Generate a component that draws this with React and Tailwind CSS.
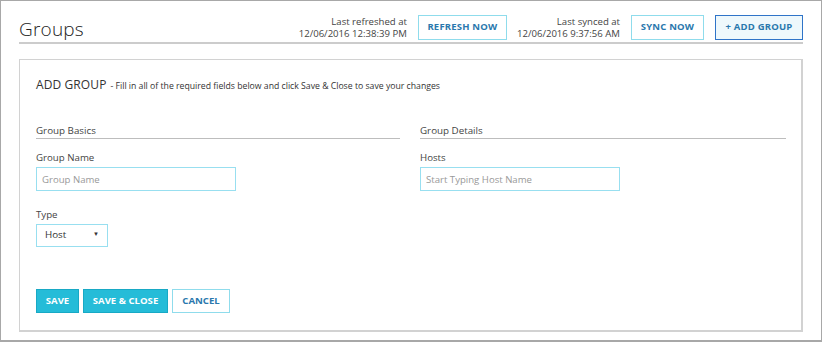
import React from 'react';

const font = { fontFamily: '"Open Sans", "Liberation Sans", sans-serif' };

const HeaderButton = ({ children, className = '' }) => (
    <button
        className={`h-[25px] border text-[9.5px] font-bold tracking-[0.2px] text-[#2a78ad] ${className}`}
    >
        {children}
    </button>
);

const Stamp = ({ label, value }) => (
    <div className="text-right text-[9.6px] leading-[12px] text-[#444]">
        <div>{label}</div>
        <div>{value}</div>
    </div>
);

const App = () => {
    return (
        <div
            className="w-[822px] h-[342px] bg-white border border-[#a8a8a8] border-b-2 px-[18px] pt-[14px]"
            style={font}
        >
            {/* Header */}
            <div className="flex items-end border-b-2 border-[#cccccc] pb-[2px]">
                <h1 className="flex-1 text-[19px] font-light leading-none pb-[1px] text-[#222] tracking-[0.2px]">Groups</h1>
                <Stamp label="Last refreshed at" value="12/06/2016 12:38:39 PM" />
                <HeaderButton className="ml-[11px] w-[89px] border-[#8fdcec]">REFRESH NOW</HeaderButton>
                <div className="ml-[10px]">
                    <Stamp label="Last synced at" value="12/06/2016 9:37:56 AM" />
                </div>
                <HeaderButton className="ml-[11px] w-[73px] border-[#8fdcec]">SYNC NOW</HeaderButton>
                <HeaderButton className="ml-[11px] w-[88px] border-[#2f74c8] bg-[#eef8fc]">+ ADD GROUP</HeaderButton>
            </div>

            {/* Panel */}
            <div className="mt-[15px] h-[273px] border border-[#d2d2d2] border-r-2 border-b-2 px-[16px] pt-[17px]">
                <div className="flex items-baseline leading-[16px] text-[#333]">
                    <span className="text-[12px] tracking-[0.1px]">ADD GROUP</span>
                    <span className="ml-[4px] text-[8.7px]">- Fill in all of the required fields below and click Save &amp; Close to save your changes</span>
                </div>

                <div className="mt-[30px] grid grid-cols-[364px_366px] gap-x-[20px]">
                    <div>
                        <div className="text-[9.8px] leading-[14px] text-[#444] border-b border-[#bdbdbd]">Group Basics</div>
                        <div className="mt-[12px] text-[9.7px] leading-[14px] text-[#444]">Group Name</div>
                        <input
                            placeholder="Group Name"
                            className="mt-[2px] block w-[200px] h-[24px] border border-[#98dff0] px-[5px] text-[9.6px] outline-none placeholder:text-[#999]"
                        />
                        <div className="mt-[17px] text-[9.7px] leading-[14px] text-[#444]">Type</div>
                        <div className="mt-[2px] flex items-center justify-between w-[72px] h-[23px] border border-[#98dff0] pl-[8px] pr-[8px] text-[9.8px] text-[#333]">
                            <span>Host</span>
                            <span className="text-[6px] leading-none -mt-[4px]">▼</span>
                        </div>
                    </div>
                    <div>
                        <div className="text-[9.8px] leading-[14px] text-[#444] border-b border-[#bdbdbd]">Group Details</div>
                        <div className="mt-[12px] text-[9.7px] leading-[14px] text-[#444]">Hosts</div>
                        <input
                            placeholder="Start Typing Host Name"
                            className="mt-[2px] block w-[200px] h-[24px] border border-[#98dff0] px-[5px] text-[9.6px] outline-none placeholder:text-[#999]"
                        />
                    </div>
                </div>

                <div className="mt-[42px] flex gap-[4px]">
                    <button className="w-[43px] h-[24px] bg-[#25bcd8] border border-[#18a9c5] text-white text-[9.6px] font-bold">SAVE</button>
                    <button className="w-[85px] h-[24px] bg-[#25bcd8] border border-[#18a9c5] text-white text-[9.6px] font-bold">SAVE &amp; CLOSE</button>
                    <button className="w-[58px] h-[24px] bg-white border border-[#8fdcec] text-[#2a78ad] text-[9.6px] font-bold">CANCEL</button>
                </div>
            </div>
        </div>
    );
};

export default App;
